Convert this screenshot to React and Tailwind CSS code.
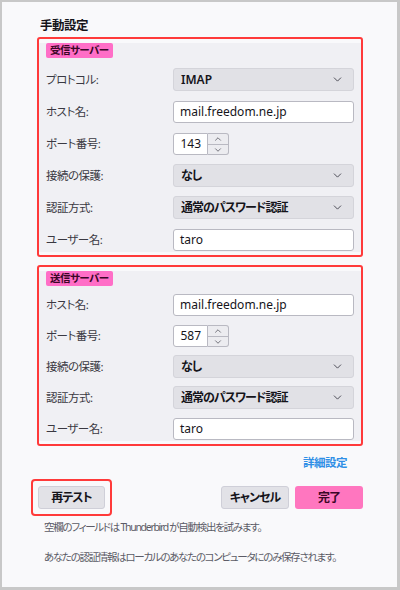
import { ChevronDown, ChevronUp } from "lucide-react";

const font = { fontFamily: '"Noto Sans", "Noto Sans CJK JP", sans-serif' };

function Select({ value, jp }) {
  return (
    <div className="flex h-[23px] flex-1 items-center justify-between rounded-[3px] border border-[#d4d4da] bg-[#e1e1e6] pl-[7px] pr-[9px]">
      <span
        className={`text-[12px] font-semibold leading-none text-[#15141a] ${jp ? "tracking-[-1px]" : ""}`}
      >
        {value}
      </span>
      <ChevronDown className="h-[13px] w-[13px] text-[#3a3a44]" strokeWidth={1.6} />
    </div>
  );
}

function Input({ value }) {
  return (
    <div className="flex h-[22px] flex-1 items-center rounded-[3px] border border-[#b9b9c2] bg-white px-[6px] text-[12px] leading-none text-[#15141a]">
      {value}
    </div>
  );
}

function Port({ value }) {
  return (
    <div className="flex h-[22px] items-center">
      <div className="flex h-full w-[35px] items-center justify-end rounded-l-[3px] border border-[#b9b9c2] bg-white pr-[6px] text-[12px] leading-none text-[#15141a]">
        {value}
      </div>
      <div className="flex h-full w-[21px] flex-col overflow-hidden rounded-r-[3px] border border-l-0 border-[#b9b9c2] bg-[#ececf0]">
        <div className="flex flex-1 items-center justify-center border-b border-[#b9b9c2]">
          <ChevronUp className="h-[10px] w-[10px] text-[#3a3a44]" strokeWidth={1.6} />
        </div>
        <div className="flex flex-1 items-center justify-center">
          <ChevronDown className="h-[10px] w-[10px] text-[#3a3a44]" strokeWidth={1.6} />
        </div>
      </div>
    </div>
  );
}

function Row({ label, children }) {
  return (
    <div className="flex h-[23px] items-center">
      <div className="w-[127px] shrink-0 text-[11.5px] leading-none tracking-[-0.5px] text-[#3a3942]">{label}</div>
      <div className="flex flex-1 items-center">{children}</div>
    </div>
  );
}

function ServerBox({ title, gap, top, rows }) {
  return (
    <div className="rounded-[3px] border-2 border-[#ff3a3a] bg-[#f9f9fb] pt-[10px] pb-[3px]">
      <div className="bg-[#f0f0f4] px-[7px] pb-[1px]">
        <div className="-mt-[6px] flex h-[15px] w-fit items-center rounded-[2px] bg-[#ff6ec7] px-[4px] text-[10.5px] font-bold leading-none tracking-[-0.5px] text-[#3b0626]">
          {title}
        </div>
        <div className={`flex flex-col ${top} ${gap}`}>
          {rows.map((r) => (
            <Row key={r[0]} label={r[0]}>
              {r[1]}
            </Row>
          ))}
        </div>
      </div>
    </div>
  );
}

const btn =
  "flex h-[23px] items-center justify-center rounded-[3px] text-[12px] font-semibold leading-none tracking-[-1px]";

export default function App() {
  return (
    <div
      style={font}
      className='h-[590px] w-[400px] border-t-2 border-l-2 border-r-[3px] border-b-[3px] border-[#c8c8c8] bg-[#f9f9fb] pl-[35px] pr-[34px] pt-[15px] [font-feature-settings:"palt"]'
    >
      <div className="h-[18px] pl-[3px] text-[12.5px] font-bold leading-[18px] tracking-[-0.5px] text-[#15141a]">手動設定</div>
      <div className="mt-[2px]">
        <ServerBox
          title="受信サーバー"
          gap="gap-[9px]"
          top="mt-[10px]"
          rows={[
            ["プロトコル:", <Select value="IMAP" />],
            ["ホスト名:", <Input value="mail.freedom.ne.jp" />],
            ["ポート番号:", <Port value="143" />],
            ["接続の保護:", <Select value="なし" jp />],
            ["認証方式:", <Select value="通常のパスワード認証" jp />],
            ["ユーザー名:", <Input value="taro" />],
          ]}
        />
      </div>
      <div className="mt-[8px]">
        <ServerBox
          title="送信サーバー"
          gap="gap-[8px]"
          top="mt-[7px]"
          rows={[
            ["ホスト名:", <Input value="mail.freedom.ne.jp" />],
            ["ポート番号:", <Port value="587" />],
            ["接続の保護:", <Select value="なし" jp />],
            ["認証方式:", <Select value="通常のパスワード認証" jp />],
            ["ユーザー名:", <Input value="taro" />],
          ]}
        />
      </div>
      <div className="mt-[9px] flex justify-end pr-[16px]">
        <span className="text-[11.5px] font-bold leading-[16px] tracking-[-0.5px] text-[#2f8fe6]">詳細設定</span>
      </div>
      <div className="mt-[8px] flex items-center justify-between">
        <div className="-ml-[6px] rounded-[4px] border-2 border-[#ff3a3a] px-[5px] py-[5px]">
          <div className={`${btn} w-[67px] border border-[#cfcfd8] bg-[#e2e2e7] text-[#15141a]`}>再テスト</div>
        </div>
        <div className="flex gap-[6px]">
          <div className={`${btn} w-[68px] border border-[#cfcfd8] bg-[#e2e2e7] text-[#15141a]`}>キャンセル</div>
          <div className={`${btn} w-[68px] bg-[#ff76bf] text-[#3b0626]`}>完了</div>
        </div>
      </div>
      <div className="mt-[3px] whitespace-nowrap pl-[7px] text-[10.5px] leading-[16px] tracking-[-1.3px] text-[#5b5b66]">
        空欄のフィールドは Thunderbird が自動検出を試みます。
      </div>
      <div className="mt-[14px] whitespace-nowrap pl-[7px] text-[10.5px] leading-[16px] tracking-[-1.3px] text-[#5b5b66]">
        あなたの認証情報はローカルのあなたのコンピュータにのみ保存されます。
      </div>
    </div>
  );
}
